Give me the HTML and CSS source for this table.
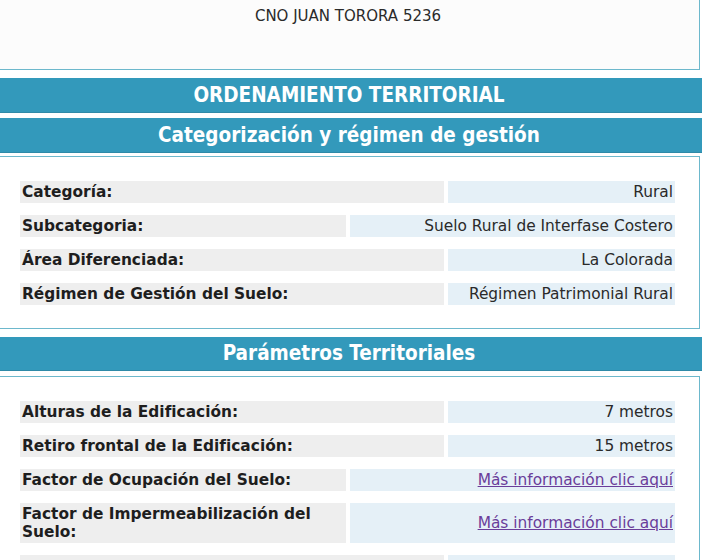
FILE: index.html
```html
<!DOCTYPE html>
<html lang="es">
<head>
<meta charset="utf-8">
<title>Ordenamiento Territorial</title>
<link rel="stylesheet" href="styles.css">
</head>
<body>
<div class="page">
  <div class="panel address">
    <p class="addr">CNO JUAN TORORA 5236</p>
  </div>

  <h2 class="bar bar-main">ORDENAMIENTO TERRITORIAL</h2>
  <h3 class="bar">Categorización y régimen de gestión</h3>

  <div class="panel data">
    <div class="row"><div class="lbl">Categoría:</div><div class="val">Rural</div></div>
    <div class="row wide"><div class="lbl">Subcategoria:</div><div class="val">Suelo Rural de Interfase Costero</div></div>
    <div class="row"><div class="lbl">Área Diferenciada:</div><div class="val">La Colorada</div></div>
    <div class="row"><div class="lbl">Régimen de Gestión del Suelo:</div><div class="val">Régimen Patrimonial Rural</div></div>
  </div>

  <h3 class="bar bar-params">Parámetros Territoriales</h3>

  <div class="panel data">
    <div class="row"><div class="lbl">Alturas de la Edificación:</div><div class="val">7 metros</div></div>
    <div class="row"><div class="lbl">Retiro frontal de la Edificación:</div><div class="val">15 metros</div></div>
    <div class="row wide"><div class="lbl">Factor de Ocupación del Suelo:</div><div class="val"><a href="#fos" class="more">Más información clic aquí</a></div></div>
    <div class="row wide"><div class="lbl">Factor de Impermeabilización del Suelo:</div><div class="val"><a href="#fis" class="more">Más información clic aquí</a></div></div>
    <div class="row row-empty"><div class="lbl"></div><div class="val"></div></div>
  </div>
</div>
</body>
</html>
```
FILE: styles.css
```css
html, body {
  margin: 0;
  padding: 0;
  background: #ffffff;
  overflow: hidden;
}

.page {
  width: 706px;
  margin-left: -4px;
  font-family: "DejaVu Sans", Verdana, sans-serif;
  color: #222222;
}

.panel {
  box-sizing: border-box;
  width: 704px;
  border: 1px solid #6db8cc;
  background: #ffffff;
}

.address {
  margin-top: -30px;
  height: 100px;
  padding-top: 36px;
  background: #fcfcfc;
}

.addr {
  margin: 0;
  text-align: center;
  font-family: "DejaVu Sans", sans-serif;
  font-size: 15px;
  line-height: 18px;
  color: #2a2a2a;
}

.bar {
  box-sizing: border-box;
  width: 706px;
  height: 34px;
  margin: 6px 0 0;
  background: #3399bb;
  color: #ffffff;
  text-align: center;
  font-family: "DejaVu Sans Condensed", "DejaVu Sans", sans-serif;
  font-weight: bold;
  font-size: 20.5px;
  line-height: 34px;
  box-shadow: 0 1px 0 #2f8aa8;
}

.bar-main {
  margin-top: 8px;
}

.bar-params {
  margin-top: 8px;
  height: 33px;
  line-height: 33px;
}

.data {
  margin-top: 4px;
  padding: 24px 24px 23px 23px;
  display: flex;
  flex-direction: column;
  gap: 12px;
}

.bar-params + .data {
  margin-top: 6px;
}

.row {
  display: flex;
  gap: 4px;
  font-size: 15.4px;
  line-height: 18px;
}

.row-empty {
  height: 22px;
}

.lbl {
  box-sizing: border-box;
  width: 424px;
  flex: none;
  padding: 2px 2px;
  background: #eeeeee;
  font-weight: bold;
  color: #1e1e1e;
}

.row.wide .lbl {
  width: 326px;
}

.val {
  flex: 1;
  padding: 2px 2px;
  background: #e5f0f7;
  text-align: right;
  display: flex;
  align-items: center;
  justify-content: flex-end;
  color: #2a2a2a;
}

.more {
  color: #6a3d9a;
  text-decoration: underline;
}
```
